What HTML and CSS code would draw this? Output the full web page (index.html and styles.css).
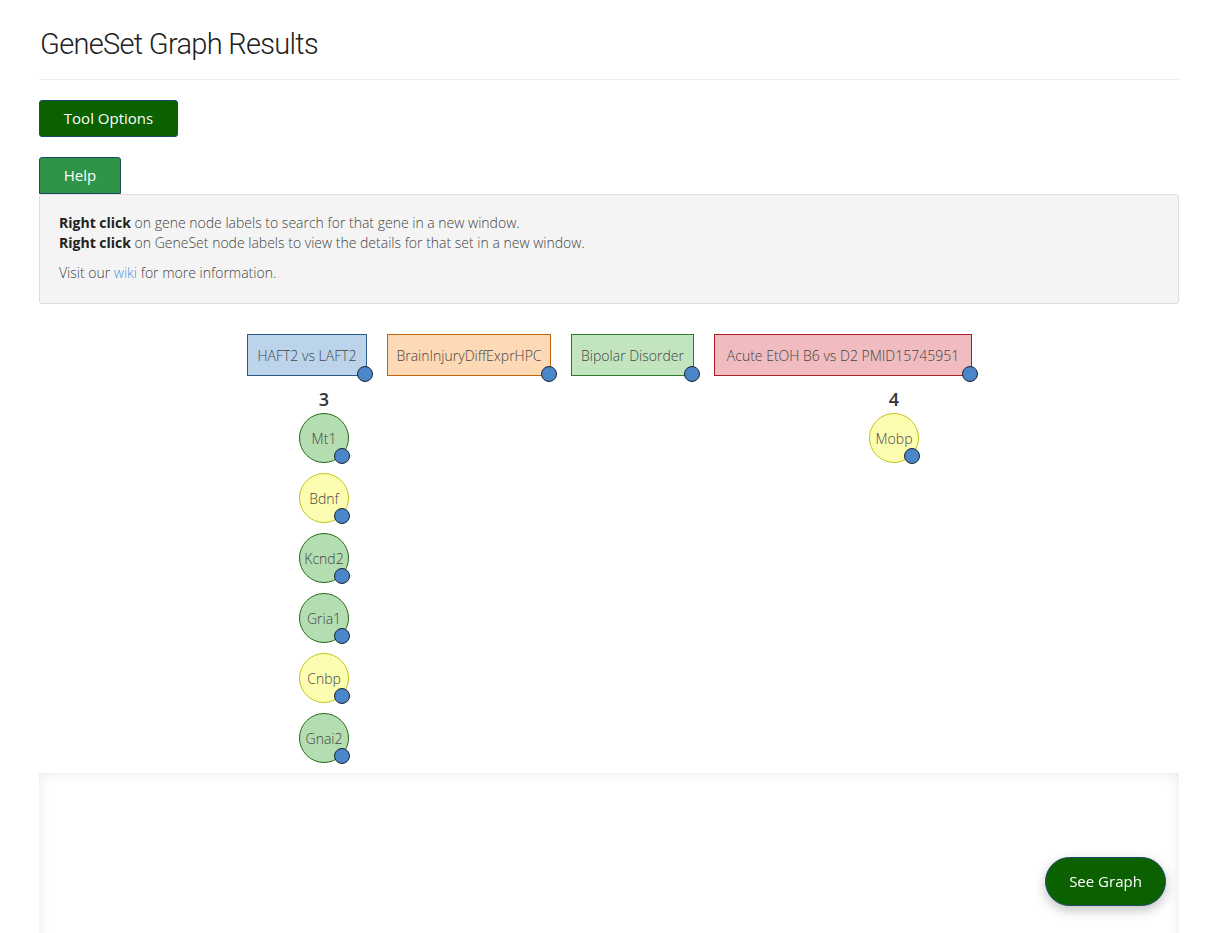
FILE: index.html
```html
<!DOCTYPE html>
<html>
<head>
<meta charset="utf-8">
<title>GeneSet Graph Results</title>
<link rel="stylesheet" href="styles.css">
</head>
<body>
<div class="container">
  <h1 class="title">GeneSet Graph Results</h1>
  <hr class="rule">
  <button class="btn btn-dark">Tool Options</button>
  <div class="help">
    <button class="btn btn-help">Help</button>
    <div class="help-panel">
      <p><b>Right click</b> on gene node labels to search for that gene in a new window.<br><b>Right click</b> on GeneSet node labels to view the details for that set in a new window.</p>
      <p>Visit our <a href="#">wiki</a> for more information.</p>
    </div>
  </div>
  <div class="graph">
    <div class="set set-blue" style="left:208px;width:120px">HAFT2 vs LAFT2<span class="dot"></span></div>
    <div class="set set-orange" style="left:348px;width:164px">BrainInjuryDiffExprHPC<span class="dot"></span></div>
    <div class="set set-green" style="left:532px;width:123px">Bipolar Disorder<span class="dot"></span></div>
    <div class="set set-red" style="left:675px;width:258px">Acute EtOH B6 vs D2 PMID15745951<span class="dot"></span></div>

    <div class="count" style="left:260px">3</div>
    <div class="count" style="left:830px">4</div>

    <div class="gene gene-green" style="left:260px;top:110px">Mt1<span class="gdot"></span></div>
    <div class="gene gene-yellow" style="left:260px;top:170px">Bdnf<span class="gdot"></span></div>
    <div class="gene gene-green" style="left:260px;top:230px">Kcnd2<span class="gdot"></span></div>
    <div class="gene gene-green" style="left:260px;top:290px">Gria1<span class="gdot"></span></div>
    <div class="gene gene-yellow" style="left:260px;top:350px">Cnbp<span class="gdot"></span></div>
    <div class="gene gene-green" style="left:260px;top:410px">Gnai2<span class="gdot"></span></div>
    <div class="gene gene-yellow" style="left:830px;top:110px">Mobp<span class="gdot"></span></div>
  </div>
  <div class="result-box"></div>
</div>
<button class="btn see-graph">See Graph</button>
</body>
</html>
```
FILE: styles.css
```css
html, body {
  margin: 0;
  padding: 0;
  background: #fff;
}
body {
  font-family: "Open Sans", "Liberation Sans", sans-serif;
  font-size: 14px;
  color: #333;
}
.container {
  width: 1140px;
  margin-left: 39px;
}
.title {
  font-family: Roboto, Lato, sans-serif;
  font-weight: 300;
  font-size: 29px;
  letter-spacing: -0.7px;
  line-height: 34px;
  margin: 27px 0 0 1px;
  color: #222;
}
.rule {
  border: 0;
  border-top: 1px solid #eee;
  margin: 18px 0 20px;
}
.btn {
  font-family: "Open Sans", "Liberation Sans", sans-serif;
  font-size: 15px;
  color: #fff;
  cursor: pointer;
  display: block;
}
.btn-dark {
  background: #0b6000;
  border: 1px solid #1d4a6a;
  border-radius: 3px;
  width: 139px;
  height: 37px;
  padding: 0 0 2px;
}
.help {
  margin-top: 20px;
}
.btn-help {
  background: #2f9447;
  border: 1px solid #1d4a6a;
  border-radius: 3px 3px 0 0;
  width: 82px;
  height: 37px;
  padding: 0 0 2px;
}
.help-panel {
  background: #f4f4f4;
  border: 1px solid #ddd;
  border-radius: 3px;
  padding: 18px 19px 10px;
  font-weight: 300;
  color: #444;
  line-height: 20px;
}
.help-panel p {
  margin: 0 0 10px;
}
.help-panel b {
  font-weight: 700;
  color: #222;
}
.help-panel a {
  color: #3c9be0;
  text-decoration: none;
}
.graph {
  position: relative;
  height: 469px;
}
.set {
  position: absolute;
  top: 30px;
  height: 42px;
  box-sizing: border-box;
  border: 1px solid;
  display: flex;
  align-items: center;
  justify-content: center;
  font-size: 14px;
  font-weight: 300;
  color: #444;
  white-space: nowrap;
}
.set-blue { background: #bcd4ea; border-color: #2a5a8a; }
.set-orange { background: #fdd9b5; border-color: #c0640f; }
.set-green { background: #c2e5c0; border-color: #2d7a2d; }
.set-red { background: #f0bcbf; border-color: #a81c28; }
.dot, .gdot {
  position: absolute;
  width: 16px;
  height: 16px;
  box-sizing: border-box;
  border-radius: 50%;
  background: #4a86c8;
  border: 1.5px solid #1c2733;
}
.dot {
  right: -7px;
  bottom: -7px;
}
.count {
  position: absolute;
  top: 83px;
  width: 50px;
  text-align: center;
  font-size: 18px;
  font-weight: 600;
  line-height: 24px;
  color: #333;
}
.gene {
  position: absolute;
  width: 50px;
  height: 50px;
  box-sizing: border-box;
  border-radius: 50%;
  border: 1px solid;
  display: flex;
  align-items: center;
  justify-content: center;
  font-size: 14px;
  font-weight: 300;
  color: #444;
  margin-top: -1px;
}
.gene-green { background: #b5ddb2; border-color: #2a6a1a; }
.gene-yellow { background: #fdfdb2; border-color: #c4c41a; }
.gdot {
  left: 34px;
  top: 34px;
}
.result-box {
  height: 200px;
  background: #fff;
  box-shadow: inset 0 0 14px rgba(0,0,0,0.09);
}
.see-graph {
  position: fixed;
  right: 54px;
  bottom: 27px;
  background: #0b6000;
  border: 1px solid #1d4a6a;
  border-radius: 25px;
  width: 121px;
  height: 49px;
  padding: 0 0 1px;
  box-shadow: 0 4px 12px rgba(0,0,0,0.25);
}
```
